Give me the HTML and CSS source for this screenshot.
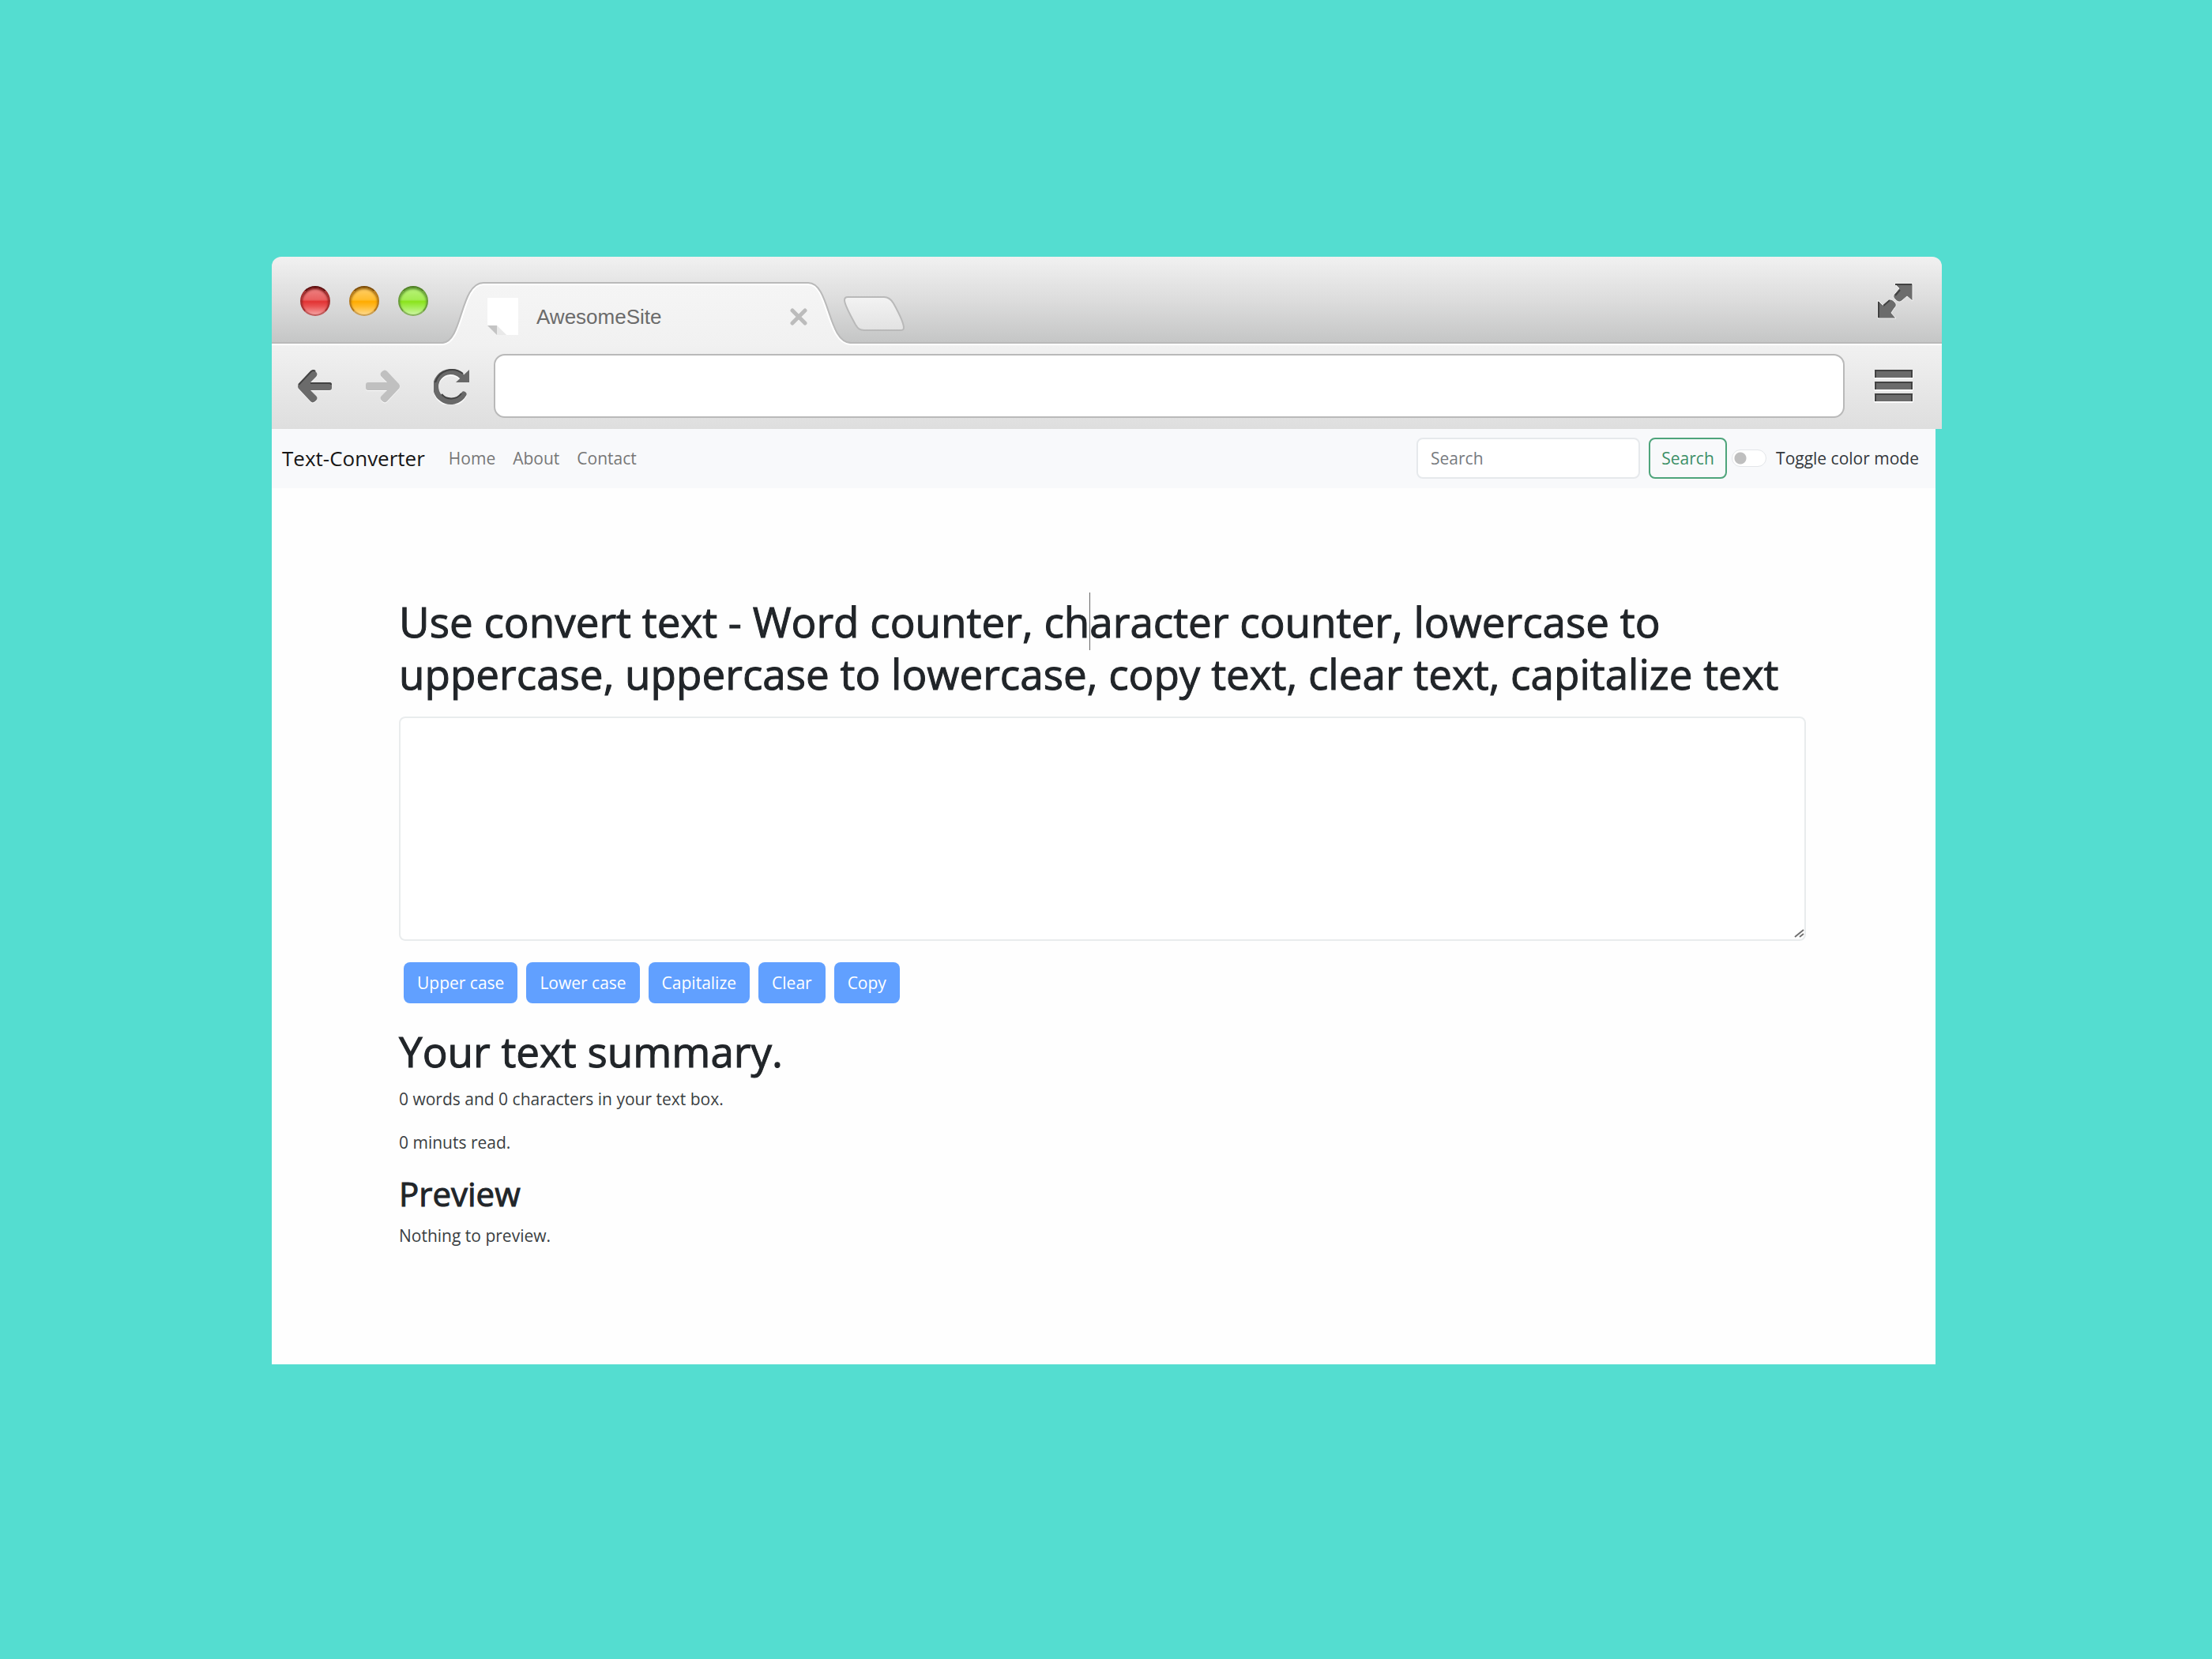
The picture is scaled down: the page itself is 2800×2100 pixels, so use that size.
FILE: index.html
```html
<!DOCTYPE html>
<html lang="en">
<head>
<meta charset="utf-8">
<title>Text-Converter</title>
<link rel="stylesheet" href="styles.css">
</head>
<body>
<div class="browser">
  <header class="chrome">
    <div class="tab-strip">
      <div class="lights">
        <button class="light light-red" aria-label="Close window"></button>
        <button class="light light-amber" aria-label="Minimize window"></button>
        <button class="light light-green" aria-label="Zoom window"></button>
      </div>
      <div class="tab">
        <svg class="tab-edge" width="52" height="80" viewBox="0 0 52 80" aria-hidden="true">
          <path d="M0 80V78C26 77 22 1 52 1V80Z" fill="url(#tabFill)"/>
          <path d="M0 79C28 78 24 3 52 3" fill="none" stroke="#fff" stroke-width="2"/>
          <path d="M0 77C26 76 22 1 52 1" fill="none" stroke="#b9b9b9" stroke-width="2"/>
          <defs><linearGradient id="tabFill" x1="0" y1="0" x2="0" y2="1"><stop offset="0" stop-color="#f5f5f5"/><stop offset="1" stop-color="#f1f1f1"/></linearGradient></defs>
        </svg>
        <div class="tab-body">
          <svg class="favicon" width="39" height="47" viewBox="0 0 39 47" aria-hidden="true">
            <path d="M0 0H39V47H24L12 35H0Z" fill="#fff"/>
            <path d="M0 35H12V47Z" fill="#c4c4c4"/>
            <path d="M12 35L24 47H12Z" fill="#e9e9e9"/>
          </svg>
          <span class="tab-title">AwesomeSite</span>
          <button class="icon-button" aria-label="Close tab">
            <svg width="22" height="22" viewBox="0 0 22 22"><path d="M3 3L19 19M19 3L3 19" stroke="#bcbcbc" stroke-width="5" stroke-linecap="round"/></svg>
          </button>
        </div>
        <svg class="tab-edge" width="54" height="80" viewBox="0 0 54 80" aria-hidden="true">
          <path d="M54 80V78C24 77 28 1 0 1V80Z" fill="url(#tabFill)"/>
          <path d="M54 79C22 78 26 3 0 3" fill="none" stroke="#fff" stroke-width="2"/>
          <path d="M54 77C24 76 28 1 0 1" fill="none" stroke="#b9b9b9" stroke-width="2"/>
        </svg>
      </div>
      <button class="icon-button new-tab" aria-label="New tab">
        <svg width="78" height="45" viewBox="0 0 78 45">
          <defs><linearGradient id="newFill" x1="0" y1="0" x2="0" y2="1"><stop offset="0" stop-color="#f3f3f3"/><stop offset="1" stop-color="#e2e2e2"/></linearGradient></defs>
          <path d="M5 1H51C57 1 60 4 63 9C68 18 76 33 76 40C76 42 75 43 72 43H26C20 43 18 41 15 36C10 27 1 11 1 5C1 2 2 1 5 1Z" fill="url(#newFill)" stroke="#b9b9b9" stroke-width="2"/>
        </svg>
      </button>
      <button class="icon-button expand" aria-label="Full screen">
        <svg width="46" height="46" viewBox="0 0 46 46">
          <g fill="#6c6c6c" stroke="#f2f2f2" stroke-width="1">
            <path d="M22 1H45V23L38 17L31 23C28 25 26 24 23 21C20 18 20 16 23 13L28 7Z"/>
            <path d="M1 22L8 29L14 22C17 20 19 21 22 24C25 27 25 29 22 32L18 38L24 45H1Z"/>
          </g>
          <path d="M23 2H44M23 16L29 9M2 24V44M8 29L16 22" fill="none" stroke="#414141" stroke-width="2"/>
        </svg>
      </button>
    </div>
    <div class="toolbar">
      <button class="icon-button" aria-label="Back">
        <svg width="46" height="46" viewBox="0 0 46 46">
          <path d="M2 23C2 21 3 20 4 19L18 4C20 2 22 2 24 4C27 6 27 9 25 11L18 18H42C44 18 45 19 45 21V25C45 27 44 28 42 28H18L25 35C27 37 27 39 25 41C22 44 20 44 18 42L4 27C3 26 2 25 2 23Z" transform="translate(0 1)" fill="#fafafa"/>
          <path d="M2 23C2 21 3 20 4 19L18 4C20 2 22 2 24 4C27 6 27 9 25 11L18 18H42C44 18 45 19 45 21V25C45 27 44 28 42 28H18L25 35C27 37 27 39 25 41C22 44 20 44 18 42L4 27C3 26 2 25 2 23Z" fill="#6b6b6b"/>
          <path d="M3 21L19 4Q22 2 24 4M18 19H42Q44 19 44 21" fill="none" stroke="#424242" stroke-width="2"/>
        </svg>
      </button>
      <button class="icon-button" aria-label="Forward">
        <svg width="46" height="46" viewBox="0 0 46 46">
          <path d="M44 23C44 21 43 20 42 19L28 4C26 2 24 2 22 4C19 6 19 9 21 11L28 18H4C2 18 1 19 1 21V25C1 27 2 28 4 28H28L21 35C19 37 19 39 21 41C24 44 26 44 28 42L42 27C43 26 44 25 44 23Z" transform="translate(0 1)" fill="#fafafa"/>
          <path d="M44 23C44 21 43 20 42 19L28 4C26 2 24 2 22 4C19 6 19 9 21 11L28 18H4C2 18 1 19 1 21V25C1 27 2 28 4 28H28L21 35C19 37 19 39 21 41C24 44 26 44 28 42L42 27C43 26 44 25 44 23Z" fill="#c0c0c0"/>
        </svg>
      </button>
      <button class="icon-button" aria-label="Reload">
        <svg width="46" height="46" viewBox="0 0 46 46">
          <path d="M35 10A19 19 0 1 0 38 33" transform="translate(0 2)" fill="none" stroke="#fafafa" stroke-width="7" stroke-linecap="round"/>
          <path d="M35 10A19 19 0 1 0 38 33" fill="none" stroke="#696969" stroke-width="7" stroke-linecap="round"/>
          <path d="M45 2V18H28Z" fill="#696969"/>
          <path d="M37 7A22 22 0 0 0 2 18M10 33A16 16 0 0 0 35 32" fill="none" stroke="#424242" stroke-width="2"/>
        </svg>
      </button>
      <input class="address" type="text" aria-label="Address">
      <button class="icon-button menu" aria-label="Menu">
        <svg width="50" height="44" viewBox="0 0 50 44">
          <g fill="#fafafa"><rect x="0" y="2" width="50" height="11" rx="2"/><rect x="0" y="17" width="50" height="11" rx="2"/><rect x="0" y="32" width="50" height="11" rx="2"/></g>
          <g fill="#6b6b6b"><rect x="1" y="1" width="48" height="10" rx="1"/><rect x="1" y="16" width="48" height="10" rx="1"/><rect x="1" y="31" width="48" height="10" rx="1"/></g>
          <path d="M2 11V2H48V11M2 26V17H48V26M2 41V32H48V41" fill="none" stroke="#424242" stroke-width="2"/>
        </svg>
      </button>
    </div>
  </header>
  <div class="page">
    <nav class="navbar">
      <a class="brand" href="#">Text-Converter</a>
      <div class="links">
        <a href="#">Home</a>
        <a href="#">About</a>
        <a href="#">Contact</a>
      </div>
      <form class="search">
        <input class="search-input" type="search" placeholder="Search" aria-label="Search">
        <button class="search-button" type="button">Search</button>
      </form>
      <input class="switch" type="checkbox" id="mode">
      <label class="switch-label" for="mode">Toggle color mode</label>
    </nav>
    <main class="content">
      <h1 class="title"><label for="text">Use convert text - Word counter, ch<span class="caret"></span>aracter counter, lowercase to uppercase, uppercase to lowercase, copy text, clear text, capitalize text</label></h1>
      <textarea class="editor" id="text"></textarea>
      <div class="actions">
        <button class="action">Upper case</button>
        <button class="action">Lower case</button>
        <button class="action">Capitalize</button>
        <button class="action">Clear</button>
        <button class="action">Copy</button>
      </div>
      <h1 class="title summary-title">Your text summary.</h1>
      <p>0 words and 0 characters in your text box.</p>
      <p>0 minuts read.</p>
      <h2 class="subtitle">Preview</h2>
      <p>Nothing to preview.</p>
    </main>
  </div>
</div>
</body>
</html>
```
FILE: styles.css
```css
* {
  box-sizing: border-box;
}

body {
  margin: 0;
  padding: 325px 342px 373px 344px;
  background: #54ddd0;
  color: #212529;
  font-family: "Open Sans", "Noto Sans", sans-serif;
  font-size: 21px;
  line-height: 34px;
}

button,
input,
textarea {
  font: inherit;
}

.icon-button {
  display: flex;
  padding: 0;
  border: 0;
  background: none;
}

/* Browser frame */
.chrome {
  border-radius: 12px 12px 0 0;
  overflow: hidden;
}

.tab-strip {
  display: flex;
  align-items: flex-start;
  height: 112px;
  padding: 0 36px;
  background: linear-gradient(#f1f1f1, #dcdcdc 50%, #c5c6c6 108px, #b9b9b9 108px, #b9b9b9 110px, #fff 110px);
}

.lights {
  display: flex;
  gap: 24px;
  padding-top: 37px;
}

.light {
  width: 38px;
  height: 38px;
  padding: 0;
  border: 2px solid;
  border-radius: 50%;
}

.light-red {
  border-color: #5c0b0b #a53030 #c05a5a;
  background: linear-gradient(#ee8484, #e96060 45%, #e23333 52%, #e95252 70%, #f6a0a0);
  box-shadow: inset 0 2px 3px #6d0d0d;
}

.light-amber {
  border-color: #7c4a04 #b5781a #cc9f50;
  background: linear-gradient(#ffcf6a, #ffbd2e 45%, #ffab00 52%, #ffba2a 70%, #ffd98a);
  box-shadow: inset 0 2px 3px #94600c;
}

.light-green {
  border-color: #4d7e22 #6a9d3a #88b35c;
  background: linear-gradient(#baf27c, #a3ec52 45%, #8be31c 52%, #a0ec4c 70%, #ccf6a0);
  box-shadow: inset 0 2px 3px #55902a;
}

.tab {
  display: flex;
  margin: 32px 0 0 18px;
}

.tab-body {
  display: flex;
  align-items: center;
  width: 411px;
  height: 80px;
  padding: 5px 1px 0 5px;
  border-top: 2px solid #b9b9b9;
  background: linear-gradient(#fff 2px, #f5f5f5 2px, #f1f1f1);
}

.tab-title {
  flex: 1;
  padding-left: 23px;
  color: #6b6b6b;
  font-family: "Liberation Sans", sans-serif;
  font-size: 26px;
}

.new-tab {
  margin: 50px 0 0 -9px;
}

.expand {
  margin: 33px 0 0 auto;
}

.toolbar {
  display: flex;
  align-items: center;
  gap: 41px;
  height: 106px;
  padding: 0 36px 3px 31px;
  background: linear-gradient(#f1f1f1, #dedede);
}

.address {
  flex: 1;
  min-width: 0;
  height: 81px;
  margin: 0 -4px 0 -11px;
  padding: 0 20px;
  border: 2px solid #b9b9b9;
  border-radius: 14px;
  background: #fff;
}

/* Site */
.page {
  min-height: 1184px;
  margin-right: 8px;
  background: #fefefe;
}

.navbar {
  display: flex;
  align-items: center;
  height: 75px;
  padding: 0 21px 2px 13px;
  background: #f8f9fb;
}

.navbar a {
  text-decoration: none;
}

.brand {
  color: #161616;
  font-size: 26px;
}

.links {
  display: flex;
  gap: 22px;
  padding-left: 30px;
}

.links a {
  color: #777;
}

.search {
  display: flex;
  gap: 11px;
  margin-left: auto;
}

.search-input {
  width: 283px;
  height: 52px;
  padding: 0 16px;
  border: 2px solid #e6e9ec;
  border-radius: 8px;
  background: #fff;
}

.search-input::placeholder {
  color: #777b7f;
}

.search-button {
  width: 99px;
  height: 52px;
  padding: 0;
  border: 2px solid #4ea47b;
  border-radius: 8px;
  background: transparent;
  color: #3c8f67;
}

.switch {
  width: 44px;
  height: 22px;
  margin: 0 12px 0 6px;
  border: 1px solid #e3e6e9;
  border-radius: 11px;
  appearance: none;
  background: radial-gradient(circle at 10px 10px, #bfbfbf 7px, #fff 8px);
}

.switch-label {
  color: #34383c;
}

.content {
  padding: 136px 164px 0 161px;
}

.title {
  margin: 0 0 21px;
  font-size: 53px;
  font-weight: 400;
  line-height: 66px;
  -webkit-text-stroke: 1px currentColor;
}

.summary-title {
  margin-bottom: 10px;
}

.caret {
  position: relative;
}

.caret::after {
  content: "";
  position: absolute;
  top: 0;
  left: 0;
  width: 1px;
  height: 73px;
  background: #666;
}

.editor {
  display: block;
  width: 100%;
  height: 284px;
  padding: 8px 16px;
  border: 2px solid #e9eced;
  border-radius: 8px;
  background: #fff;
}

.editor::-webkit-resizer {
  background: url("data:image/svg+xml,%3Csvg xmlns='http://www.w3.org/2000/svg' width='15' height='15'%3E%3Cpath d='M3 12L14 3M9 12L14 8' stroke='%23707070' stroke-width='2'/%3E%3C/svg%3E") no-repeat right bottom;
}

.actions {
  display: flex;
  gap: 11px;
  padding: 27px 6px 28px;
}

.action {
  height: 52px;
  padding: 0 17px;
  border: 0;
  border-radius: 8px;
  background: #61a0ff;
  color: #fff;
}

.content p {
  margin: 0 0 21px;
  color: #3a3e42;
}

.subtitle {
  margin: 0 0 9px;
  font-size: 42px;
  font-weight: 400;
  line-height: 54px;
  -webkit-text-stroke: 1px currentColor;
}
```
